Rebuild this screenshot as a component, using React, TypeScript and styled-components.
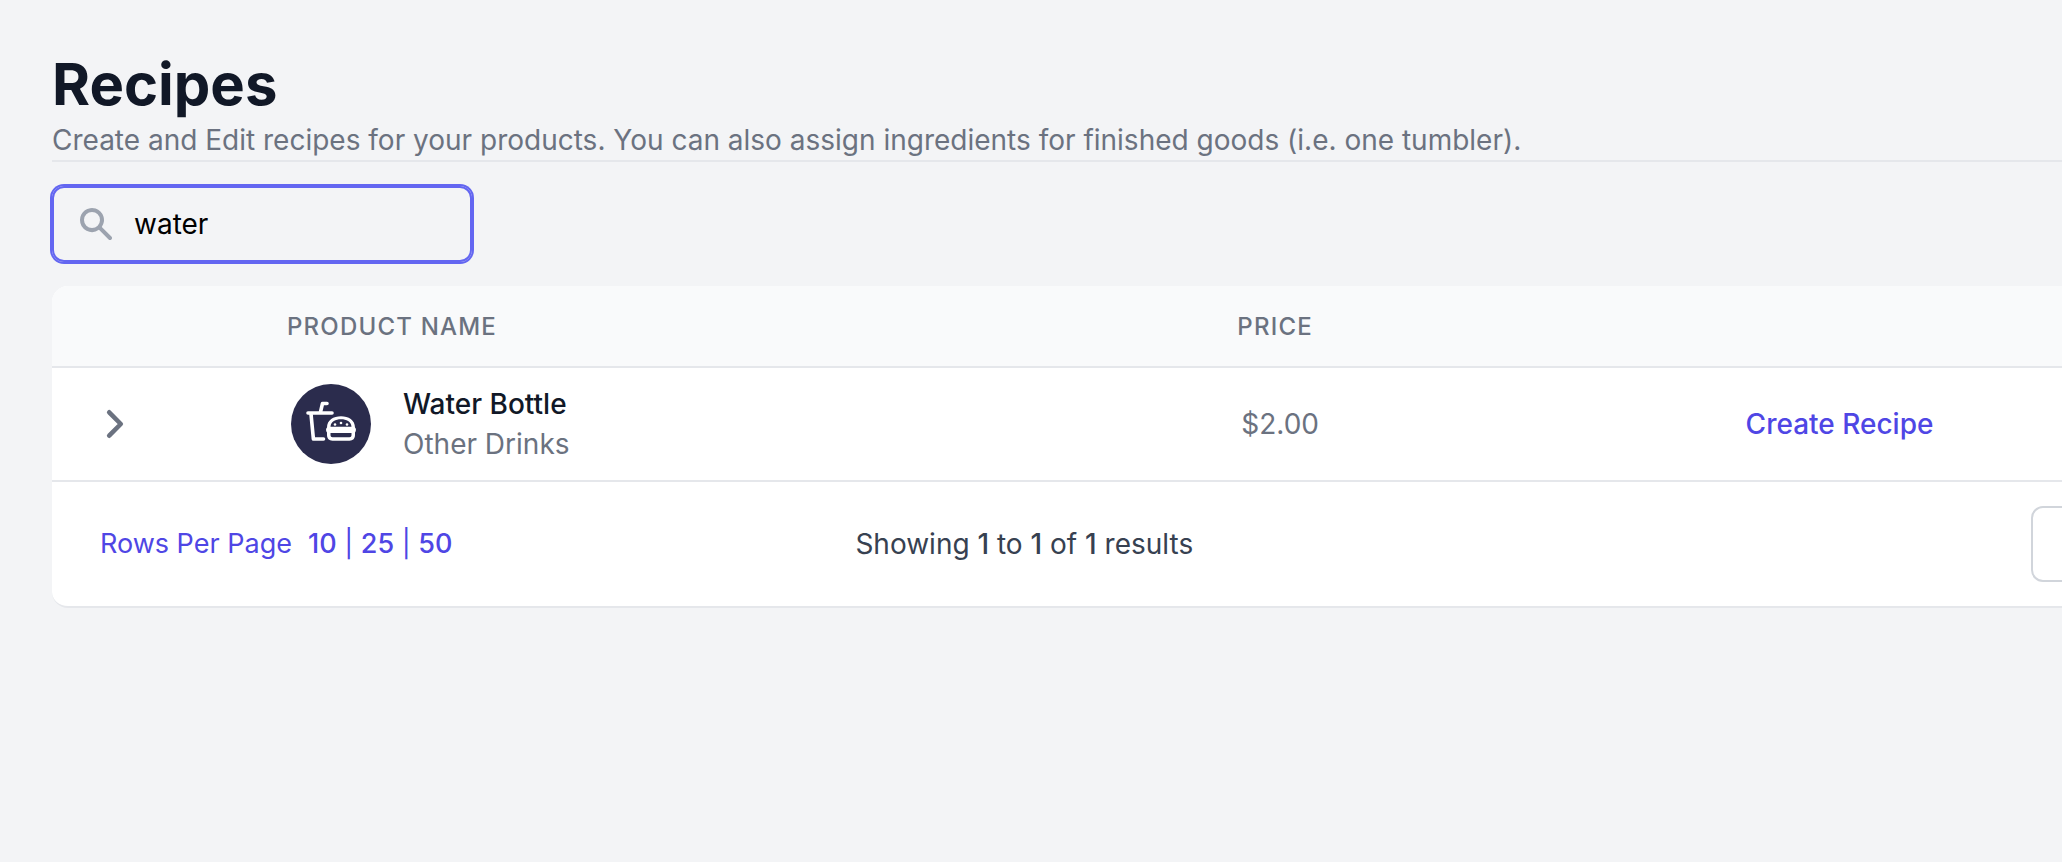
import React, { useState } from "react";
import styled, { createGlobalStyle } from "styled-components";

const GlobalStyle = createGlobalStyle`
  *, *::before, *::after { box-sizing: border-box; }
  body {
    margin: 0;
    min-height: 100vh;
    background: #f3f4f6;
    color: #111827;
    font-family: Inter, "Liberation Sans", sans-serif;
    font-size: 28px;
    line-height: 40px;
  }
  button, input { font: inherit; }
`;

const Page = styled.main`
  padding: 48px 0 48px 52px;
  overflow-x: hidden;
`;

const PageHeader = styled.header`
  border-bottom: 2px solid #e5e7eb;
`;

const Title = styled.h1`
  margin: 0;
  font-size: 58px;
  line-height: 72px;
  font-weight: 700;
`;

const Subtitle = styled.p`
  margin: 0;
  color: #6b7280;
`;

const SearchField = styled.label`
  display: flex;
  align-items: center;
  gap: 18px;
  width: 420px;
  height: 76px;
  margin-top: 24px;
  padding: 0 24px;
  border-radius: 12px;
  box-shadow: 0 0 0 2px #6366f1, inset 0 0 0 2px #6366f1;
`;

const SearchInput = styled.input`
  flex: 1;
  min-width: 0;
  padding: 0;
  border: 0;
  outline: 0;
  background: transparent;
  color: #000;
`;

const Card = styled.section`
  width: calc(100% + 200px);
  margin-top: 24px;
  overflow: hidden;
  border-radius: 16px;
  border-bottom: 2px solid #e5e7eb;
  background: #fff;
`;

const Table = styled.table`
  width: 100%;
  table-layout: fixed;
  border-collapse: separate;
  border-spacing: 0;
  text-align: left;
`;

const Column = styled.col<{ $width?: string }>`
  width: ${({ $width }) => $width ?? "auto"};
`;

const HeadCell = styled.th`
  height: 82px;
  padding: 2px 48px 0;
  background: #f9fafb;
  border-bottom: 2px solid #e5e7eb;
  color: #6b7280;
  font-size: 24px;
  line-height: 32px;
  font-weight: 500;
  letter-spacing: 0.05em;
  text-transform: uppercase;
`;

const Cell = styled.td<{ $inset?: number }>`
  height: 114px;
  padding: 0 0 0 ${({ $inset }) => $inset ?? 52}px;
  border-bottom: 2px solid #e5e7eb;
  color: #6b7280;
`;

const ExpandButton = styled.button`
  display: block;
  padding: 0;
  border: 0;
  background: none;
  color: #6b7280;
  cursor: pointer;
  svg { display: block; }
`;

const Product = styled.div`
  display: flex;
  align-items: center;
  gap: 32px;
`;

const ProductName = styled.div`
  color: #111827;
  font-weight: 500;
`;

const TextLink = styled.a`
  color: #4f46e5;
  font-weight: 500;
  text-decoration: none;
`;

const Footer = styled.footer`
  display: grid;
  grid-template-columns: 755fr 1175fr 231px;
  align-items: center;
  height: 124px;
  padding-left: 48px;
`;

const RowsPerPage = styled.div`
  display: flex;
  gap: 16px;
  color: #4f46e5;
  font-size: 27px;
`;

const Summary = styled.p`
  margin: 0;
  color: #374151;
  strong { font-weight: 500; }
`;

const PagerButton = styled.button`
  justify-self: start;
  width: 180px;
  height: 76px;
  border: 2px solid #d1d5db;
  border-radius: 12px;
  background: #fff;
`;

const SearchIcon = () => (
  <svg width="40" height="40" viewBox="0 0 20 20" fill="#9ca3af" aria-hidden="true">
    <path
      fillRule="evenodd"
      clipRule="evenodd"
      d="M8 4a4 4 0 100 8 4 4 0 000-8zM2 8a6 6 0 1110.89 3.476l4.817 4.817a1 1 0 01-1.414 1.414l-4.816-4.816A6 6 0 012 8z"
    />
  </svg>
);

const ChevronIcon = () => (
  <svg
    width="40"
    height="40"
    viewBox="0 0 40 40"
    fill="none"
    stroke="currentColor"
    strokeWidth="4.6"
    strokeLinecap="round"
    strokeLinejoin="round"
    aria-hidden="true"
  >
    <path d="M15.200 8.300L26.800 20L15.200 31.700" />
  </svg>
);

const MealBadge = () => (
  <svg width="80" height="80" viewBox="0 0 80 80" fill="none" aria-hidden="true">
    <circle cx="40" cy="40" r="40" fill="#2b2c4d" />
    <g stroke="#fff" strokeWidth="3.6" strokeLinecap="round" strokeLinejoin="round">
      <path d="M17 29H41" />
      <path d="M29.500 28L31.500 19.500H36" />
      <path d="M20 30L22.400 55H32.500" />
    </g>
    <path
      fill="#fff"
      fillRule="evenodd"
      d="M36 43.500C36 36 42.500 32.200 50 32.200S64 36 64 43.500C65.300 44.500 65.300 47 64 48.500V51C64 54.500 62 56.700 58.500 56.700H41.500C38 56.700 36 54.500 36 51V48.500C34.700 47 34.700 44.500 36 43.500ZM39.500 42.700H60.500C60 37.500 55.500 35.300 50 35.300S40 37.500 39.500 42.700ZM39.500 49V51C39.500 52.500 40.300 53.200 41.500 53.200H58.500C59.700 53.200 60.500 52.500 60.500 51V49Z"
    />
    <g fill="#fff">
      <circle cx="44" cy="40.500" r="1.300" />
      <circle cx="50" cy="39" r="1.300" />
      <circle cx="56" cy="40.500" r="1.300" />
    </g>
  </svg>
);

const products = [{ name: "Water Bottle", category: "Other Drinks", price: "$2.00" }];

export default function App() {
  const [query, setQuery] = useState("water");

  return (
    <>
      <GlobalStyle />
      <Page>
        <PageHeader>
          <Title>Recipes</Title>
          <Subtitle>
            Create and Edit recipes for your products. You can also assign ingredients for finished
            goods (i.e. one tumbler).
          </Subtitle>
        </PageHeader>

        <SearchField>
          <SearchIcon />
          <SearchInput
            type="text"
            aria-label="Search recipes"
            value={query}
            onChange={(event) => setQuery(event.target.value)}
          />
        </SearchField>

        <Card>
          <Table>
            <colgroup>
              <Column $width="187px" />
              <Column $width="43%" />
              <Column $width="23%" />
              <Column />
            </colgroup>
            <thead>
              <tr>
                <HeadCell aria-label="Expand" />
                <HeadCell>Product Name</HeadCell>
                <HeadCell>Price</HeadCell>
                <HeadCell aria-label="Actions" />
              </tr>
            </thead>
            <tbody>
              {products.map((product) => (
                <tr key={product.name}>
                  <Cell $inset={42}>
                    <ExpandButton type="button" aria-label={`Expand ${product.name}`}>
                      <ChevronIcon />
                    </ExpandButton>
                  </Cell>
                  <Cell>
                    <Product>
                      <MealBadge />
                      <div>
                        <ProductName>{product.name}</ProductName>
                        <div>{product.category}</div>
                      </div>
                    </Product>
                  </Cell>
                  <Cell>{product.price}</Cell>
                  <Cell $inset={48}>
                    <TextLink href="#create">Create Recipe</TextLink>
                  </Cell>
                </tr>
              ))}
            </tbody>
          </Table>

          <Footer>
            <RowsPerPage>
              <span>Rows Per Page</span>
              <span>
                <TextLink href="#10">10</TextLink> | <TextLink href="#25">25</TextLink> |{" "}
                <TextLink href="#50">50</TextLink>
              </span>
            </RowsPerPage>
            <Summary>
              Showing <strong>1</strong> to <strong>1</strong> of <strong>1</strong> results
            </Summary>
            <PagerButton type="button" aria-label="Previous page" />
          </Footer>
        </Card>
      </Page>
    </>
  );
}
